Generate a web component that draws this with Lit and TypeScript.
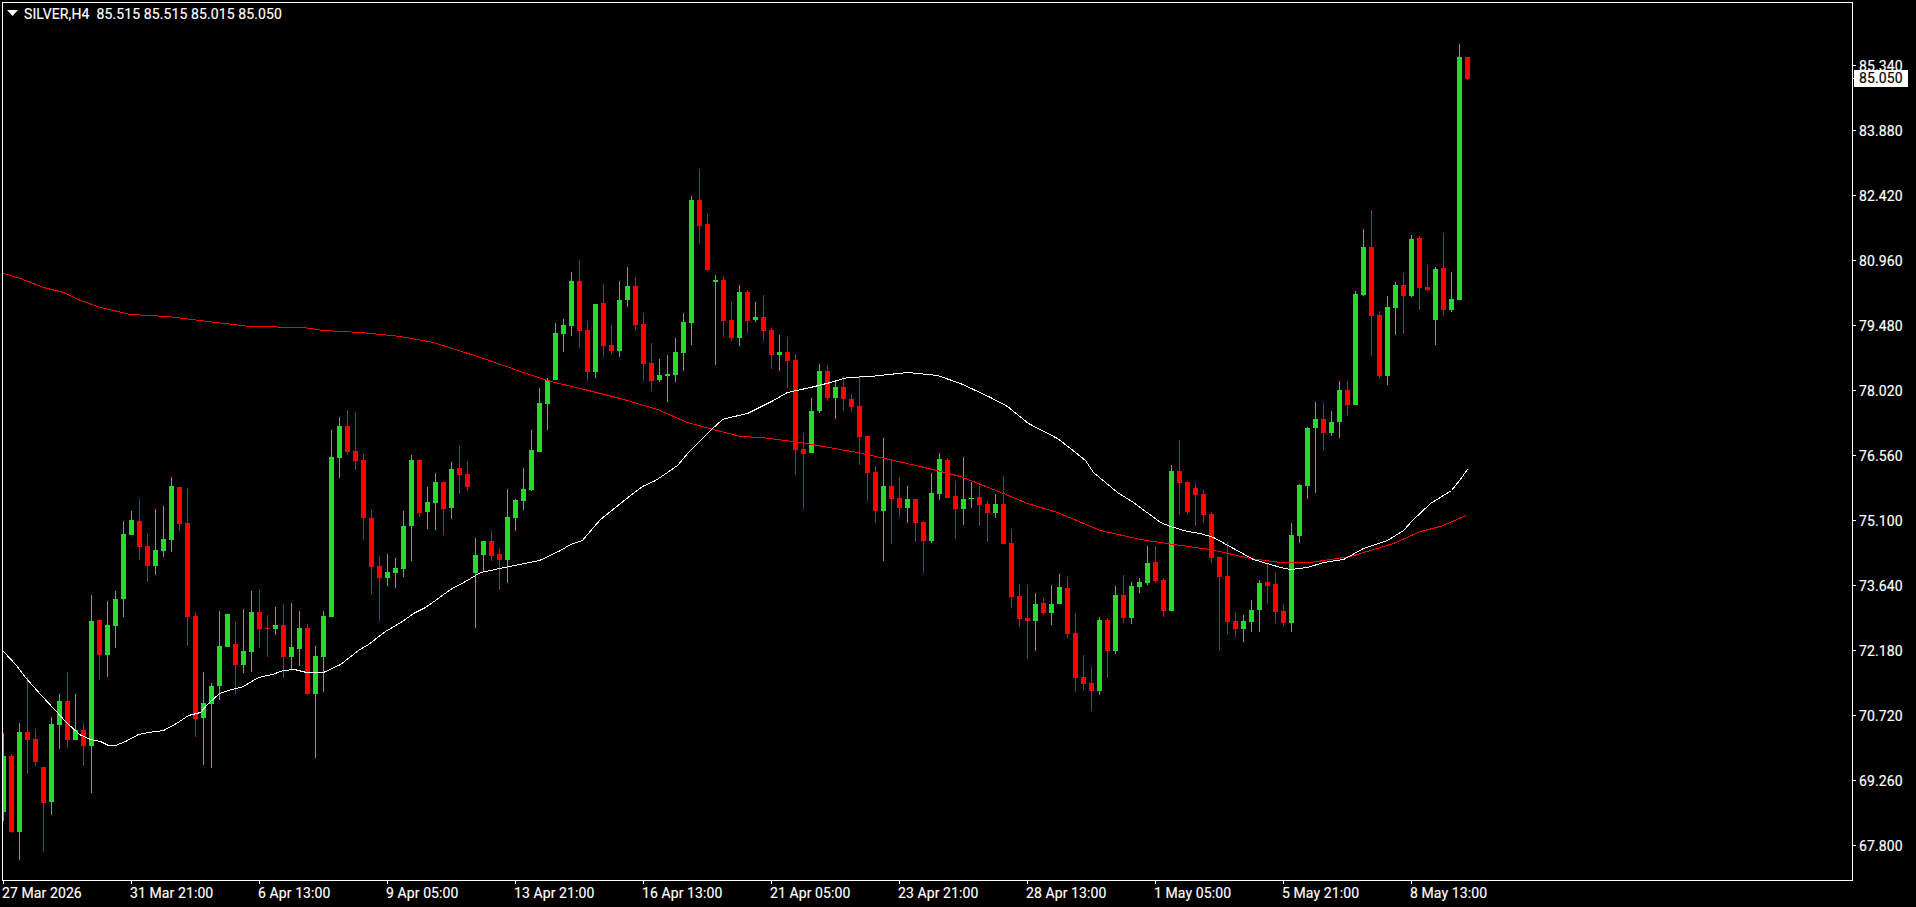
import { LitElement, html, css, svg } from "lit";
import { customElement } from "lit/decorators.js";

// [bull?1:0, wickTop, bodyTop, bodyBottom, wickBottom] in page pixels; bar i sits at x = 3 + 8i
const BARS: number[][] = [
[1,733,756,812,821],[0,754,756,832,833],[1,723,732,832,860],[0,677,732,740,774],[0,729,739,762,766],[0,767,767,803,852],[1,717,724,802,815],[1,694,701,725,749],[0,672,701,740,748],[1,694,730,740,740],
[0,723,730,746,766],[1,595,621,746,793],[0,620,620,655,680],[1,601,625,655,677],[1,591,599,626,648],[1,521,534,599,617],[1,511,520,535,535],[0,499,521,547,560],[0,534,546,566,582],[1,509,550,566,575],
[1,506,539,551,557],[1,477,486,540,552],[0,487,487,524,531],[0,488,523,617,646],[0,612,616,719,737],[1,672,703,718,765],[1,683,686,704,768],[1,611,646,686,700],[1,614,614,647,647],[0,622,644,665,694],
[1,609,651,665,673],[1,591,612,652,672],[0,590,612,629,648],[0,615,628,629,657],[1,607,625,629,635],[0,604,625,657,678],[1,603,647,657,669],[1,611,628,649,666],[0,624,628,694,695],[1,646,656,694,758],
[1,611,616,657,692],[1,430,457,617,617],[1,417,426,458,478],[0,410,426,452,455],[0,412,451,461,470],[0,454,460,518,540],[0,510,518,567,594],[0,556,566,578,621],[1,554,572,578,586],[1,558,568,573,588],
[1,511,526,569,577],[1,455,460,526,561],[0,460,460,513,517],[1,487,502,512,529],[1,473,482,503,530],[0,482,482,509,535],[1,462,469,508,519],[0,446,468,475,494],[0,461,474,487,491],[1,538,555,573,628],
[1,541,541,555,571],[0,531,541,556,561],[0,548,554,560,590],[1,489,517,560,583],[1,499,500,518,531],[1,468,489,501,510],[1,430,450,490,491],[1,388,403,452,452],[1,378,380,404,430],[1,323,333,380,380],
[1,319,325,334,352],[1,272,281,326,336],[0,260,281,331,348],[0,321,330,372,381],[1,304,304,372,378],[0,284,303,346,357],[0,325,345,351,354],[1,281,300,351,357],[1,267,286,300,307],[0,277,286,325,330],
[0,313,324,364,381],[0,343,363,381,391],[1,359,375,380,382],[1,355,374,376,402],[1,338,352,375,382],[1,313,322,353,371],[1,196,200,323,345],[0,169,200,226,244],[0,214,224,270,271],[1,275,280,282,365],
[0,276,280,321,337],[0,302,320,338,341],[1,285,292,338,346],[0,290,292,321,333],[1,302,317,320,322],[0,295,317,331,341],[0,328,330,355,369],[1,335,352,355,371],[0,337,352,361,388],[0,354,360,450,475],
[0,433,449,454,509],[1,398,411,453,453],[1,364,371,411,413],[0,365,371,398,401],[1,382,387,398,419],[0,376,387,399,411],[0,394,399,407,412],[0,376,406,437,465],[0,436,436,473,501],[0,466,472,511,523],
[1,438,486,511,561],[0,459,486,499,544],[0,477,498,508,517],[1,486,499,508,523],[0,499,499,523,542],[0,521,522,541,573],[1,473,493,541,543],[1,453,459,494,500],[0,458,460,498,498],[0,481,496,509,539],
[1,457,499,509,525],[1,482,498,499,508],[0,486,497,505,526],[0,501,504,513,542],[1,494,504,513,518],[0,476,504,544,544],[0,529,543,597,608],[0,584,596,619,627],[0,585,618,621,659],[1,593,604,621,651],
[0,598,603,613,615],[1,585,604,613,625],[1,574,587,604,604],[0,577,588,634,638],[0,613,633,678,692],[0,655,677,684,690],[0,667,683,691,711],[1,617,620,691,695],[0,618,620,651,678],[1,586,595,651,654],
[0,575,595,618,623],[1,582,586,618,624],[1,578,582,587,593],[1,546,563,583,585],[0,546,562,581,583],[0,578,580,611,617],[1,465,471,611,611],[0,440,471,483,515],[0,481,482,512,514],[0,483,488,495,526],
[0,490,494,515,523],[0,512,514,558,563],[0,557,557,577,650],[0,542,576,622,634],[0,612,621,629,637],[1,615,621,629,642],[1,600,610,622,632],[1,580,583,610,632],[0,564,582,586,604],[0,572,584,612,623],
[0,604,611,623,626],[1,523,535,623,632],[1,484,485,536,543],[1,427,428,486,499],[1,402,419,428,493],[0,403,419,433,450],[1,411,422,433,436],[1,381,390,422,438],[0,381,390,405,416],[1,291,294,405,405],
[1,229,247,295,296],[0,210,247,316,356],[0,311,315,376,378],[1,296,307,376,385],[1,282,285,308,335],[0,273,285,296,334],[1,235,239,296,297],[0,236,238,288,310],[0,265,287,290,291],[1,267,269,320,345],
[0,233,268,310,316],[1,272,299,310,312],[1,44,57,300,300],[0,57,57,79,80],
];

const WHITE_MA = "3,651 16,665 25,677 41,695 54,709 66,722 79,734 90,739 100,741 108,745 115,745 125,741 138,734 148,732 163,730 176,723 188,715 200,712 208,703 219,693 228,690 243,686 258,677 272,674 283,670 294,669 306,672 323,672 340,664 358,650 368,644 385,631 402,621 413,613 425,607 435,600 450,589 465,581 480,572 514,565 539,560 560,550 570,544 582,540 587,534 600,519 615,507 630,495 642,486 655,480 667,472 677,465 688,452 700,440 710,430 722,419 725,418 747,413 773,400 787,392 810,387 830,382 847,377 870,376 907,372 937,375 960,383 973,389 990,397 1007,406 1028,423 1057,438 1070,448 1085,460 1093,472 1117,492 1133,502 1160,522 1170,526 1187,531 1200,533 1213,537 1233,548 1253,559 1280,567 1290,569 1307,567 1323,562 1343,559 1363,548 1387,540 1403,530 1412,520 1430,503 1451,490 1459,480 1467,469";
const RED_MA = "3,273 20,278 43,287 63,292 80,300 100,307 130,314 167,316 207,321 250,326 303,327 323,330 360,332 400,336 433,342 480,357 523,372 550,381 580,388 620,398 657,409 687,422 713,429 740,436 760,437 800,442 857,452 880,457 920,466 960,476 1003,493 1027,503 1057,512 1100,530 1140,539 1173,544 1210,549 1250,558 1280,562 1310,562 1350,556 1393,543 1420,531 1440,526 1466,515";

const PRICES = ["85.340","83.880","82.420","80.960","79.480","78.020","76.560","75.100","73.640","72.180","70.720","69.260","67.800"];
const TIMES = ["27 Mar 2026","31 Mar 21:00","6 Apr 13:00","9 Apr 05:00","13 Apr 21:00","16 Apr 13:00","21 Apr 05:00","23 Apr 21:00","28 Apr 13:00","1 May 05:00","5 May 21:00","8 May 13:00"];

@customElement("app-root")
export class AppRoot extends LitElement {
  static styles = css`
    :host {
      display: block;
      width: 1916px;
      height: 907px;
      overflow: hidden;
      background: #000;
      color: #fff;
      font: 14px/16px Roboto, "Liberation Sans", sans-serif;
      letter-spacing: 0.1px;
      -webkit-text-stroke: 0.15px currentColor;
    }
    .terminal {
      display: grid;
      grid-template-columns: 1853px 63px;
      grid-template-rows: 881px 26px;
    }
    .chart {
      position: relative;
      box-sizing: border-box;
      margin: 2px 0 0 2px;
      border: 1px solid #fff;
    }
    .plot { display: block; }
    .legend {
      position: absolute;
      left: 4px;
      top: 3px;
      display: flex;
      align-items: center;
      gap: 6px;
      white-space: pre;
    }
    .legend svg { margin-bottom: 2px; }
    .price-axis {
      position: relative;
      display: flex;
      flex-direction: column;
      padding-top: 33px;
    }
    .price-row {
      height: 65px;
      flex: none;
      display: flex;
      align-items: center;
      gap: 3px;
    }
    .tick-h { width: 3px; height: 1px; background: #fff; }
    .price-tag {
      position: absolute;
      left: 1px;
      top: 70px;
      width: 54px;
      height: 17px;
      box-sizing: border-box;
      padding-left: 5px;
      background: #fff;
      color: #000;
      line-height: 17px;
    }
    .price-tick {
      position: absolute;
      left: 0;
      top: 78px;
      width: 1px;
      height: 1px;
      background: #fff;
    }
    .time-axis {
      display: flex;
      padding-left: 3px;
    }
    .time-cell {
      width: 128px;
      flex: none;
      display: flex;
      flex-direction: column;
      align-items: flex-start;
      white-space: nowrap;
    }
    .tick-v { width: 1px; height: 3px; background: #fff; }
    .time-label { margin: 1px 0 0 -1px; }
  `;

  private bars() {
    return BARS.map((b, i) => {
      const x = 3 + 8 * i;
      const fill = b[0] ? "#22dd22" : "#ff0000";
      return svg`<rect x=${x} y=${b[1]} width="1" height=${b[4] - b[1]} fill=${fill}></rect>
        <rect x=${x - 2} y=${b[2]} width="5" height=${Math.max(b[3] - b[2], 1)} fill=${fill}></rect>`;
    });
  }

  render() {
    return html`
      <div class="terminal">
        <div class="chart">
          <svg class="plot" width="1849" height="877" viewBox="3 3 1849 877" shape-rendering="crispEdges">
            ${this.bars()}
            <g transform="translate(0.5 0.5)" fill="none" stroke-width="1">
              <polyline points=${RED_MA} stroke="#ff0000"></polyline>
              <polyline points=${WHITE_MA} stroke="#ffffff"></polyline>
            </g>
          </svg>
          <div class="legend">
            <svg width="11" height="6" viewBox="0 0 11 6"><path d="M0 0H11L5.5 6Z" fill="#fff"></path></svg>
            <span>SILVER,H4  85.515 85.515 85.015 85.050</span>
          </div>
        </div>
        <div class="price-axis">
          ${PRICES.map((p) => html`<div class="price-row"><i class="tick-h"></i><span>${p}</span></div>`)}
          <i class="price-tick"></i>
          <div class="price-tag">85.050</div>
        </div>
        <div class="time-axis">
          ${TIMES.map((t) => html`<div class="time-cell"><i class="tick-v"></i><span class="time-label">${t}</span></div>`)}
        </div>
      </div>
    `;
  }
}
